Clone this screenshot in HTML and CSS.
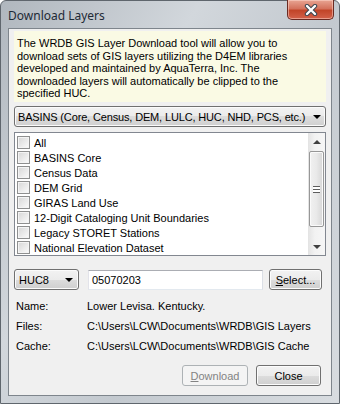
FILE: index.html
```html
<!DOCTYPE html>
<html lang="en">
<head>
    <meta charset="UTF-8">
    <title>Download Layers</title>
    <link rel="stylesheet" href="styles.css">
</head>
<body>
    <div class="window">
        <div class="titlebar">
            <span class="title">Download Layers</span>
            <button class="close-btn" type="button">
                <svg width="16" height="12" viewBox="0 0 16 12">
                    <path d="M4 2 L12 10 M12 2 L4 10" stroke="#3c4650" stroke-width="4.4" stroke-linecap="round" fill="none"/>
                    <path d="M4 2 L12 10 M12 2 L4 10" stroke="#ffffff" stroke-width="2.4" stroke-linecap="round" fill="none"/>
                </svg>
            </button>
        </div>

        <div class="client">
            <div class="info">The WRDB GIS Layer Download tool will allow you to<br>download sets of GIS layers utilizing the D4EM libraries<br>developed and maintained by AquaTerra, Inc. The<br>downloaded layers will automatically be clipped to the<br>specified HUC.</div>

            <div class="combo combo-wide">
                <span class="combo-text">BASINS (Core, Census, DEM, LULC, HUC, NHD, PCS, etc.)</span>
                <span class="arrow"></span>
            </div>

            <div class="list">
                <ul class="items">
                    <li><span class="check"></span>All</li>
                    <li><span class="check"></span>BASINS Core</li>
                    <li><span class="check"></span>Census Data</li>
                    <li><span class="check"></span>DEM Grid</li>
                    <li><span class="check"></span>GIRAS Land Use</li>
                    <li><span class="check"></span>12-Digit Cataloging Unit Boundaries</li>
                    <li><span class="check"></span>Legacy STORET Stations</li>
                    <li><span class="check"></span>National Elevation Dataset</li>
                </ul>
                <div class="scrollbar">
                    <div class="sb-btn"><span class="tri-up"></span></div>
                    <div class="sb-track">
                        <div class="thumb"><span class="grip"></span></div>
                    </div>
                    <div class="sb-btn"><span class="tri-down"></span></div>
                </div>
            </div>

            <div class="huc-row">
                <div class="combo combo-huc">
                    <span>HUC8</span>
                    <span class="arrow"></span>
                </div>
                <div class="textbox">05070203</div>
                <button class="btn btn-select" type="button"><u>S</u>elect...</button>
            </div>

            <div class="details">
                <div class="detail-row"><span class="label">Name:</span><span>Lower Levisa. Kentucky.</span></div>
                <div class="detail-row"><span class="label">Files:</span><span>C:\Users\LCW\Documents\WRDB\GIS Layers</span></div>
                <div class="detail-row"><span class="label">Cache:</span><span>C:\Users\LCW\Documents\WRDB\GIS Cache</span></div>
            </div>

            <div class="buttons">
                <button class="btn btn-disabled" type="button"><u>D</u>ownload</button>
                <button class="btn" type="button">Close</button>
            </div>
        </div>
    </div>
</body>
</html>
```

FILE: styles.css
```css
body {
    margin: 0;
    padding: 0;
    background-color: #ffffff;
    font-family: "Liberation Sans", Arial, sans-serif;
    font-size: 11px;
    color: #000;
}

.window {
    width: 340px;
    height: 404px;
    box-sizing: border-box;
    border: 1px solid #5f666d;
    border-radius: 6px 6px 0 0;
    background: linear-gradient(120deg, #b0b7be 0%, #d2d7dc 35%, #c3c9cf 60%, #d8dce0 100%);
    display: flex;
    flex-direction: column;
}

.titlebar {
    height: 27px;
    display: flex;
    align-items: flex-start;
    justify-content: space-between;
}

.title {
    font-family: "Noto Sans", "Open Sans", sans-serif;
    font-size: 12px;
    color: #1e2a36;
    margin: 6px 0 0 7px;
}

.close-btn {
    width: 47px;
    height: 20px;
    margin: -1px 5px 0 0;
    border: 1px solid #6a2a22;
    border-top: none;
    border-radius: 0 0 5px 5px;
    background: linear-gradient(#e8a593 0%, #d4725c 45%, #c24529 55%, #d3614a 100%);
    box-shadow: inset 0 0 0 1px rgba(255, 220, 210, 0.5);
    padding: 0;
    display: flex;
    align-items: center;
    justify-content: center;
}

.client {
    width: 324px;
    height: 368px;
    box-sizing: border-box;
    margin-left: 7px;
    border: 1px solid #7e858c;
    background-color: #f0f0f0;
    padding: 2px 5px 0 5px;
    display: flex;
    flex-direction: column;
}

.info {
    height: 71px;
    box-sizing: border-box;
    background-color: #fafae4;
    padding: 6px 3px 0 3px;
    line-height: 12.5px;
    white-space: nowrap;
}

.combo {
    height: 21px;
    box-sizing: border-box;
    border: 1px solid #707070;
    border-radius: 3px;
    background: linear-gradient(#f2f2f2 0%, #ebebeb 50%, #dddddd 50%, #cfcfcf 100%);
    box-shadow: inset 0 0 0 1px #fbfbfb;
    display: flex;
    align-items: center;
    justify-content: space-between;
    padding: 0 4px 0 3px;
}

.combo-wide {
    margin-top: 4px;
}

.combo-text {
    white-space: nowrap;
    letter-spacing: -0.15px;
}

.arrow {
    width: 0;
    height: 0;
    border-left: 4px solid transparent;
    border-right: 4px solid transparent;
    border-top: 4px solid #000;
    flex-shrink: 0;
}

.list {
    margin-top: 5px;
    height: 124px;
    box-sizing: border-box;
    border: 1px solid #828790;
    background-color: #fff;
    display: flex;
}

.items {
    flex: 1;
    list-style: none;
    margin: 0;
    padding: 2px 0 0 2px;
}

.items li {
    height: 15px;
    display: flex;
    align-items: center;
}

.check {
    width: 13px;
    height: 13px;
    box-sizing: border-box;
    border: 1px solid #8e8f8f;
    background: linear-gradient(135deg, #d6d6d6 0%, #f4f4f4 80%, #ffffff 100%);
    box-shadow: inset 0 0 0 1px #f4f4f4;
    margin-right: 4px;
}

.scrollbar {
    width: 17px;
    display: flex;
    flex-direction: column;
    background: linear-gradient(90deg, #e3e3e3 0%, #f2f2f2 40%, #f6f6f6 100%);
}

.sb-btn {
    height: 17px;
    display: flex;
    align-items: center;
    justify-content: center;
}

.tri-up {
    width: 0;
    height: 0;
    border-left: 4px solid transparent;
    border-right: 4px solid transparent;
    border-bottom: 4px solid #404040;
}

.tri-down {
    width: 0;
    height: 0;
    border-left: 4px solid transparent;
    border-right: 4px solid transparent;
    border-top: 4px solid #404040;
}

.sb-track {
    flex: 1;
    padding: 1px 1px 0 1px;
}

.thumb {
    height: 76px;
    box-sizing: border-box;
    border: 1px solid #979797;
    border-radius: 2px;
    background: linear-gradient(90deg, #f1f1f1 0%, #e9e9e9 50%, #d6d6d6 100%);
    box-shadow: inset 0 0 0 1px #fafafa;
    display: flex;
    align-items: center;
    justify-content: center;
}

.grip {
    width: 7px;
    height: 5px;
    border-top: 1px solid #5d5d5d;
    border-bottom: 1px solid #5d5d5d;
    background: linear-gradient(#fff 0, #fff 2px, #5d5d5d 2px, #5d5d5d 3px, #fff 3px);
}

.huc-row {
    margin-top: 13px;
    display: flex;
    align-items: center;
}

.combo-huc {
    width: 65px;
    padding: 0 5px 0 4px;
}

.textbox {
    width: 175px;
    height: 20px;
    box-sizing: border-box;
    margin-left: 9px;
    border: 1px solid #abadb3;
    border-color: #abadb3 #dbdfe6 #e3e9ef #e2e3ea;
    background-color: #fff;
    padding: 0 3px;
    display: flex;
    align-items: center;
}

.btn {
    height: 21px;
    box-sizing: border-box;
    border: 1px solid #707070;
    border-radius: 3px;
    background: linear-gradient(#f2f2f2 0%, #ebebeb 50%, #dddddd 50%, #cfcfcf 100%);
    box-shadow: inset 0 0 0 1px #fcfcfc;
    font-family: "Liberation Sans", Arial, sans-serif;
    font-size: 11px;
    color: #000;
    padding: 0;
    width: 65px;
}

.btn-select {
    width: 53px;
    margin-left: 6px;
}

.btn-disabled {
    width: 66px;
    border-color: #adb2b5;
    background: #f4f4f4;
    box-shadow: none;
    color: #838383;
}

.details {
    margin-top: 6px;
    padding-left: 2px;
}

.detail-row {
    height: 20px;
    display: flex;
    align-items: center;
}

.label {
    width: 71px;
}

.buttons {
    margin-top: 9px;
    display: flex;
    justify-content: flex-end;
    gap: 8px;
    padding-right: 5px;
}
```
